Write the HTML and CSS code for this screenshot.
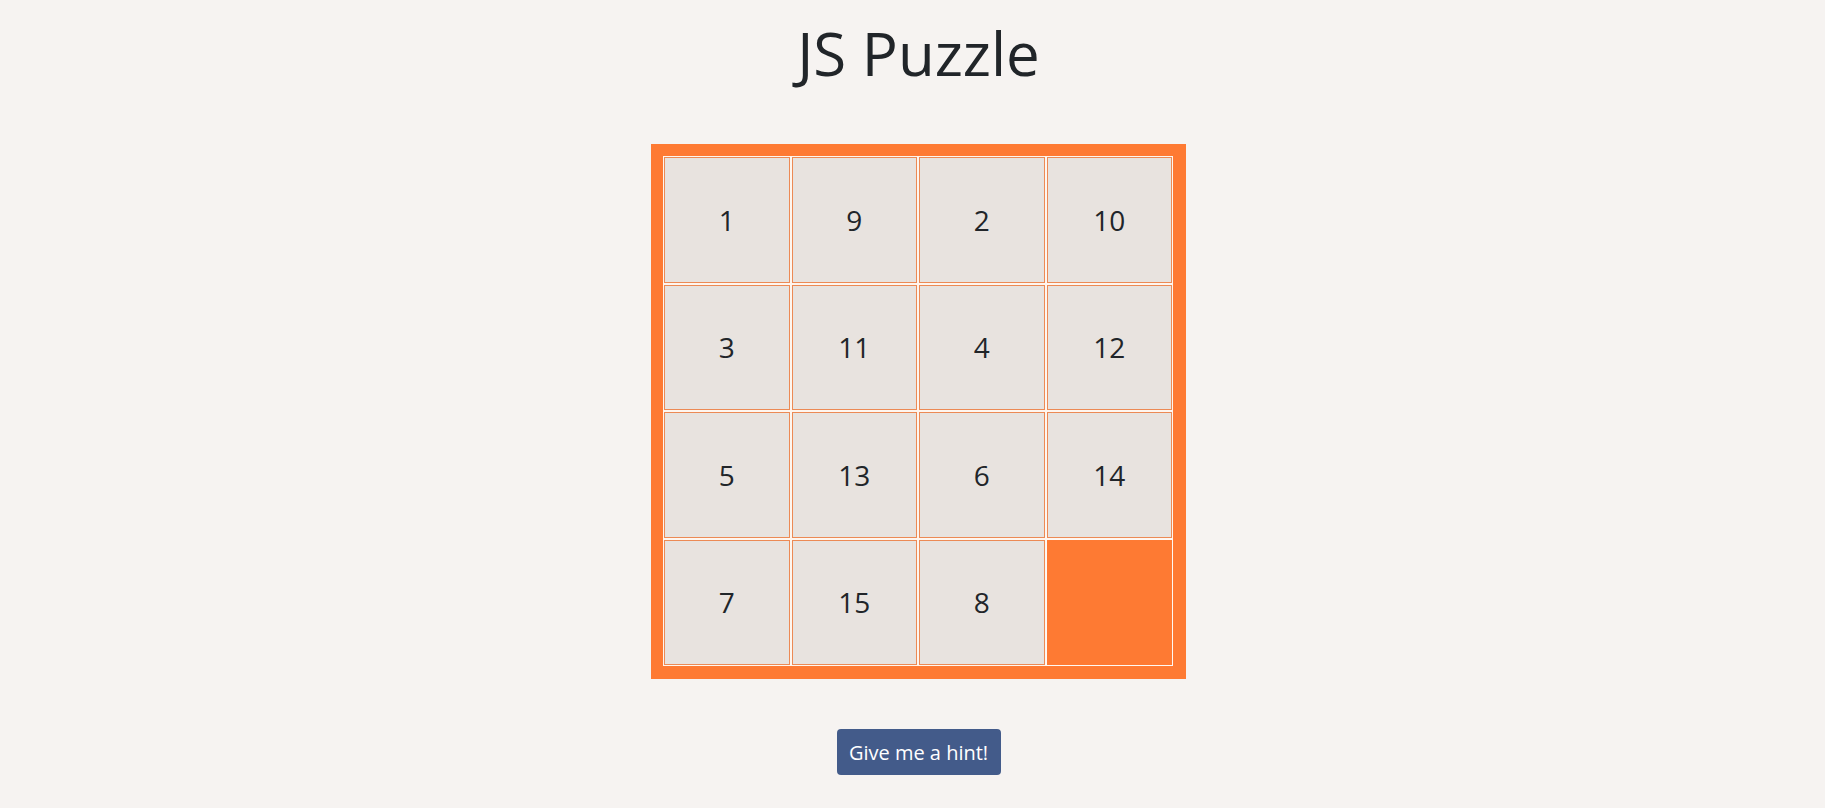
FILE: index.html
```html
<!DOCTYPE html>
<html lang="en">
<head>
<meta charset="utf-8">
<title>JS Puzzle</title>
<link rel="stylesheet" href="styles.css">
</head>
<body>
<main class="page">
  <h1 class="title">JS Puzzle</h1>
  <div class="board">
    <div class="tile"><span>1</span></div>
    <div class="tile"><span>9</span></div>
    <div class="tile"><span>2</span></div>
    <div class="tile"><span>10</span></div>
    <div class="tile"><span>3</span></div>
    <div class="tile"><span>11</span></div>
    <div class="tile"><span>4</span></div>
    <div class="tile"><span>12</span></div>
    <div class="tile"><span>5</span></div>
    <div class="tile"><span>13</span></div>
    <div class="tile"><span>6</span></div>
    <div class="tile"><span>14</span></div>
    <div class="tile"><span>7</span></div>
    <div class="tile"><span>15</span></div>
    <div class="tile"><span>8</span></div>
    <div class="tile empty"><span></span></div>
  </div>
  <button class="hint" type="button">Give me a hint!</button>
</main>
</body>
</html>
```

FILE: styles.css
```css
html, body {
  margin: 0;
  padding: 0;
  background: #f6f3f1;
}

body {
  font-family: "Open Sans", "Noto Sans", "Liberation Sans", sans-serif;
  color: #212529;
}

.page {
  display: flex;
  flex-direction: column;
  align-items: center;
  padding-left: 12px;
}

.title {
  margin: 14px 0 0 0;
  font-size: 60px;
  font-weight: 400;
  line-height: 78px;
  letter-spacing: 0;
}

.board {
  margin-top: 52px;
  display: grid;
  grid-template-columns: repeat(4, 127.5px);
  grid-template-rows: repeat(4, 127.5px);
  padding: 12px 13px 13px 12px;
  background: #fe7a33;
}

.tile {
  border: 1px solid #fff6ef;
  background: #e8e3df;
  box-shadow: inset 0 0 0 1px #ec8a55;
  display: flex;
  align-items: center;
  justify-content: center;
  font-size: 28px;
}

.tile.empty {
  background: #fe7a33;
  box-shadow: none;
  border: 1px solid #fff8f3;
}

.hint {
  margin-top: 50px;
  width: 164px;
  height: 46px;
  border: 0;
  border-radius: 4px;
  background: #435b8a;
  color: #ffffff;
  font-family: inherit;
  font-size: 20px;
  padding: 0;
  cursor: pointer;
}
```
